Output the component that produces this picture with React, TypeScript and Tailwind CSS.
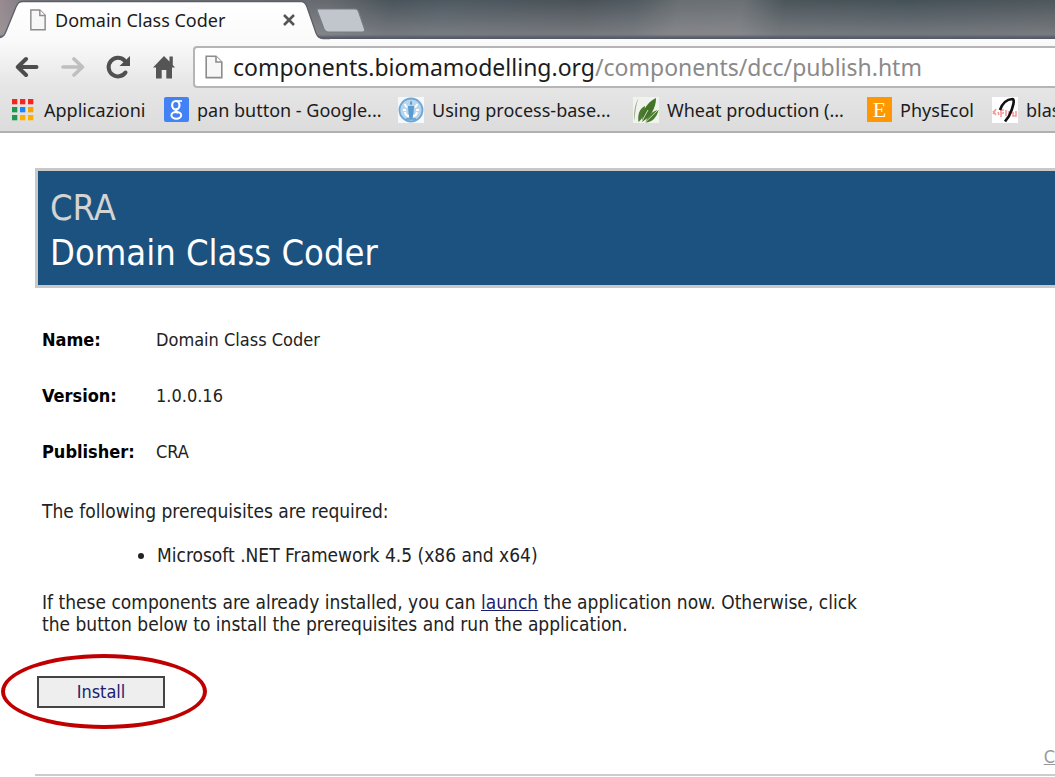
import React from "react";

function PageIcon({ className }: { className: string }) {
  return (
    <svg viewBox="0 0 18 24" className={className} fill="none" aria-hidden="true">
      <path d="M1.2 1.2H11L16.8 7V22.6H1.2Z" fill="#f7f7f7" stroke="#8c8c8c" strokeWidth="1.6" />
      <path d="M11 1.2V7H16.8" fill="#fff" stroke="#8c8c8c" strokeWidth="1.6" />
    </svg>
  );
}

function TabShape() {
  return (
    <svg viewBox="0 0 330 40" className="absolute left-0 top-0 h-10 w-[330px]" aria-hidden="true">
      <defs>
        <linearGradient id="tab" x1="0" y1="0" x2="0" y2="1">
          <stop offset="0" stopColor="#ffffff" />
          <stop offset="1" stopColor="#fafafa" />
        </linearGradient>
      </defs>
      <path
        d="M0 38C4 37 5 34 7 29L16 7C18 3 19 1.500 23 1.500H301C305 1.500 306 4 307 7L316 33C317.500 37 319 38.500 323 38.500V40H0Z"
        fill="url(#tab)"
      />
      <path
        d="M0 37.500C4 37 5 34 7 29L16 7C18 3 19 1.500 23 1.500H301C305 1.500 306 4 307 7L316 33C317.500 37 319 38.500 323 38.500H330"
        fill="none"
        stroke="#5c6066"
        strokeWidth="1.300"
      />
    </svg>
  );
}

function BackIcon() {
  return (
    <svg viewBox="0 0 24 22" className="h-[22px] w-6" fill="none" stroke="#4d4d4d" strokeWidth="4" strokeLinecap="round" strokeLinejoin="round" aria-hidden="true">
      <path d="M11 3L2.800 11L11 19M3.500 11H21.500" />
    </svg>
  );
}

function ForwardIcon() {
  return (
    <svg viewBox="0 0 24 22" className="h-[22px] w-6" fill="none" stroke="#bfbfbf" strokeWidth="3.600" strokeLinecap="round" strokeLinejoin="round" aria-hidden="true">
      <path d="M13 3L21.500 11L13 19M2 11H20.500" />
    </svg>
  );
}

function ReloadIcon() {
  return (
    <svg viewBox="0 0 26 24" className="h-6 w-[26px]" fill="none" aria-hidden="true">
      <path d="M20.500 17.500A9.300 9.300 0 1 1 19.500 5.500" stroke="#505050" strokeWidth="4" strokeLinecap="round" />
      <path d="M25 1V11H14.500Z" fill="#505050" />
    </svg>
  );
}

function HomeIcon() {
  return (
    <svg viewBox="0 0 22 24" className="h-6 w-[22px]" aria-hidden="true">
      <path d="M11 1L0 12.500H3V23.500H8.700V15H13.300V23.500H19V12.500H22L19.800 10V1.500H16.500V6.500Z" fill="#555" />
    </svg>
  );
}

function AppsIcon() {
  const colours = ["#f3261d", "#f3261d", "#f3261d", "#1f9a4c", "#1a86f5", "#f5a400", "#1f9a4c", "#fbb003", "#fbb003"];
  return (
    <svg viewBox="0 0 22 22" className="h-[22px] w-[22px]" aria-hidden="true">
      {colours.map((c, i) => (
        <rect key={i} x={(i % 3) * 8} y={Math.floor(i / 3) * 8} width="5.300" height="5.300" fill={c} />
      ))}
    </svg>
  );
}

function GoogleIcon() {
  return (
    <svg viewBox="0 0 25 25" className="h-[25px] w-[25px]" fill="none" aria-hidden="true">
      <rect width="25" height="25" rx="2" fill="#4382f4" />
      <g stroke="#fff">
        <ellipse cx="11.800" cy="8.200" rx="3.700" ry="4.200" strokeWidth="2.200" />
        <path d="M12 4H18" strokeWidth="1.600" />
        <path d="M13.500 12C10.500 13.500 11.500 14.500 14 16" strokeWidth="2.200" />
        <ellipse cx="12.300" cy="18.300" rx="4.900" ry="3.400" strokeWidth="2" />
      </g>
    </svg>
  );
}

function FaoIcon() {
  return (
    <svg viewBox="0 0 26 26" className="h-[26px] w-[26px]" fill="none" aria-hidden="true">
      <rect width="26" height="26" fill="#f5f9fc" />
      <circle cx="13" cy="13" r="11.500" fill="#b9d6ec" stroke="#6fa6d4" strokeWidth="1.800" />
      <path d="M6.500 7L9 10.500M19.500 7L17 10.500M5 13H8M18 13H21" stroke="#fff" strokeWidth="2" />
      <path d="M7 15C7.500 18 9 19 11 19M19 15C18.500 18 17 19 15 19" stroke="#fff" strokeWidth="2" />
      <path d="M13 3.500C11.500 5.500 11.500 7 13 8.500C14.500 7 14.500 5.500 13 3.500Z" fill="#5b9bd0" />
      <path d="M10 9H16L15.500 16L14.500 21.500H11.500L10.500 16Z" fill="#5b9bd0" />
      <path d="M8 22H18" stroke="#5b9bd0" strokeWidth="1.500" />
    </svg>
  );
}

function WheatIcon() {
  return (
    <svg viewBox="0 0 26 26" className="h-[26px] w-[26px]" aria-hidden="true">
      <rect width="26" height="26" fill="#f1f3ee" />
      <path d="M5.500 1C1.500 8 0.500 17 1.500 24C2 15 3 8 5.500 1Z" fill="#8fae7c" />
      <path d="M12 9C6 12 4.500 18 5.500 25C9.500 22 12 16 12 9Z" fill="#4a7a2c" />
      <path d="M23 1C13 6 9 14 9 25C17 20 23 12 23 1Z" fill="#447427" />
      <path d="M25.500 13C19 14 14 19 12.500 25.500C19 25.500 24 20 25.500 13Z" fill="#4a7a2c" />
      <path d="M8.500 25L15 13M12 25.500L25 13" stroke="#dfe8d8" strokeWidth="0.900" />
    </svg>
  );
}

function SketchIcon() {
  return (
    <svg viewBox="0 0 26 26" className="h-[26px] w-[26px]" fill="none" aria-hidden="true">
      <rect width="26" height="26" fill="#fff" />
      <path d="M1 14L4 18M4 12L1 17M6 15L7 18M9 13H12M9 13V20M9 16H12M14 13V19M17 14V19L20 14M21 15V19H24V14" stroke="#f59a9a" strokeWidth="1.600" />
      <path d="M8 13C10 7 14 2.500 20.500 2C23 2 21.500 10 17 19L13 24.500" stroke="#111" strokeWidth="2.600" />
    </svg>
  );
}

function Bookmark({ icon, label, className }: { icon: React.ReactNode; label: string; className: string }) {
  return (
    <a href="#" className={`flex shrink-0 items-center ${className}`}>
      {icon}
      <span>{label}</span>
    </a>
  );
}

function Browser() {
  return (
    <header className="font-['Noto_Sans','Open_Sans',sans-serif] text-[#1c1c1c]">
      <div className="relative h-[39px] bg-[linear-gradient(100deg,#b9a3a6_0,#8c8a90_3%,#77797d_31%,#545d63_37%,#59646b_42%,#555b60_55%,#5d666b_60%,#7b7e80_64%,#7d8083_70%,#555f63_74%,#4e5a60_86%,#5b6266_100%)]">
        <div className="h-full bg-[linear-gradient(to_bottom,rgba(30,45,55,0.200),rgba(140,140,145,0.600)_88%,#555c68_97%)]" />
        <TabShape />
        <div className="absolute left-[29px] top-0 flex h-10 w-[268px] items-center text-[18px]">
          <PageIcon className="h-[22px] w-[18px]" />
          <span className="ml-2 flex-1">Domain Class Coder</span>
          <button aria-label="Close tab" className="flex">
            <svg viewBox="0 0 12 12" className="mr-0.5 h-3 w-3" stroke="#555" strokeWidth="2.600" aria-hidden="true">
              <path d="M1 1L11 11M11 1L1 11" />
            </svg>
          </button>
        </div>
        <button aria-label="New tab" className="absolute left-[316px] top-2">
          <svg viewBox="0 0 50 25" className="h-[25px] w-[50px]" aria-hidden="true">
            <path d="M2.500 1H39C41 1 42 2 42.500 3.500L48.500 21C49 23 48.500 24 46.500 24H12C10 24 9 23 8 21L1.500 3.500C1 2 1 1 2.500 1Z" fill="#c1c6cd" stroke="#777d84" strokeWidth="1.200" />
          </svg>
        </button>
      </div>
      <div className="border-b-2 border-[#b0b0b0] bg-linear-to-b from-[#fbfbfb] via-[#e6e6e6] via-50% to-[#dcdcdc]">
        <div className="flex h-[49px] items-center pl-[15px] pt-1.5">
          <button aria-label="Back"><BackIcon /></button>
          <button aria-label="Forward" className="ml-[22px]"><ForwardIcon /></button>
          <button aria-label="Reload" className="ml-5"><ReloadIcon /></button>
          <button aria-label="Home" className="ml-[22px]"><HomeIcon /></button>
          <div className="ml-[18px] flex h-[42px] flex-1 items-center rounded-l border-2 border-r-0 border-[#b5b5b5] bg-white pl-2.5">
            <PageIcon className="h-6 w-[18px]" />
            <a href="#" className="ml-2.5 whitespace-nowrap text-[23px] leading-8">
              components.biomamodelling.org<span className="text-[#8a8a8a]">/components/dcc/publish.htm</span>
            </a>
          </div>
        </div>
        <nav className="flex h-[43px] items-center overflow-hidden whitespace-nowrap pl-3 text-[18px]">
          <Bookmark className="w-[152px] gap-2.5" icon={<AppsIcon />} label="Applicazioni" />
          <Bookmark className="w-[234px] gap-2" icon={<GoogleIcon />} label="pan button - Google..." />
          <Bookmark className="w-[235px] gap-2" icon={<FaoIcon />} label="Using process-base..." />
          <Bookmark className="w-[234px] gap-2" icon={<WheatIcon />} label="Wheat production (..." />
          <Bookmark
            className="w-[125px] gap-2"
            icon={<span className="flex h-[25px] w-[25px] items-center justify-center bg-[#ff9700] font-['Liberation_Serif',serif] text-[22px] text-white">E</span>}
            label="PhysEcol"
          />
          <Bookmark className="gap-2" icon={<SketchIcon />} label="blas" />
        </nav>
      </div>
    </header>
  );
}

const details = [
  ["Name:", "Domain Class Coder"],
  ["Version:", "1.0.0.16"],
  ["Publisher:", "CRA"],
];

export default function App() {
  return (
    <div className="min-h-screen overflow-hidden bg-white text-[18px] leading-[22px] text-[#222]">
      <Browser />
      <main className="ml-[35px] pt-[35px] font-['DejaVu_Sans_Condensed','DejaVu_Sans',sans-serif]">
        <div className="border-[3px] border-r-0 border-[#c8c8c8] bg-[#1c527f] px-3 pb-2.5 pt-3.5 text-[36px] leading-[45px]">
          <div className="text-[#d4d4d4]">CRA</div>
          <h1 className="text-white">Domain Class Coder</h1>
        </div>
        <table className="ml-[7px] mt-6 text-left">
          <tbody>
            {details.map(([name, value]) => (
              <tr key={name} className="h-14">
                <th scope="row" className="w-[114px] p-0 font-bold text-black">{name}</th>
                <td className="p-0">{value}</td>
              </tr>
            ))}
          </tbody>
        </table>
        <div className="ml-[7px] text-[19px]">
          <p className="mt-5">The following prerequisites are required:</p>
          <ul className="mt-[22px] list-disc pl-[115px]">
            <li>Microsoft .NET Framework 4.5 (x86 and x64)</li>
          </ul>
          <p className="mt-[25px]">
            If these components are already installed, you can{" "}
            <a href="#" className="text-[#1d1d70] underline">launch</a> the application now. Otherwise, click
            <br />
            the button below to install the prerequisites and run the application.
          </p>
        </div>
        <div className="relative mt-[41px] ml-0.5 w-32">
          <button className="h-8 w-full border-2 border-[#444] bg-[#eee] text-[#1d1d70]">Install</button>
          <div className="pointer-events-none absolute -left-9 -top-[22px] h-[75px] w-[206px] rounded-[50%] border-4 border-[#c00000]" />
        </div>
        <footer className="mt-[38px] flex justify-end border-b-2 border-[#ccc] pb-1.5">
          <a href="#" className="text-[#999] underline">C</a>
        </footer>
      </main>
    </div>
  );
}
